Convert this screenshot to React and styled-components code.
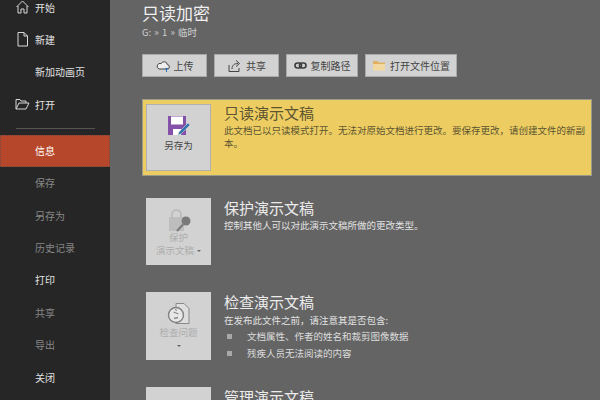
import React from "react";
import styled, { createGlobalStyle } from "styled-components";

const GlobalStyle = createGlobalStyle`
  html, body { margin: 0; padding: 0; background: #646464; overflow: hidden; }
  body { font-family: "Noto Sans CJK SC", "Liberation Sans", sans-serif; }
`;

const Page = styled.div`
  display: flex;
  width: 600px;
  height: 400px;
  overflow: hidden;
  background: #646464;
`;

const Sidebar = styled.nav`
  width: 110px;
  height: 400px;
  flex: none;
  background: #262626;
  overflow: hidden;
`;

const NavList = styled.div`
  display: flex;
  flex-direction: column;
  margin-top: -9px;
`;

const NavItem = styled.div`
  position: relative;
  height: 32.4px;
  display: flex;
  align-items: center;
  padding-left: 35px;
  font-size: 10px;
  color: ${(p) => (p.$dim ? "#868686" : "#e2e2e2")};
`;

const ActiveItem = styled(NavItem)`
  height: 32px;
  background: #b7472a;
  color: #fff;
  outline: 1px dotted #6e4a40;
  outline-offset: -1px;
`;

const NavIcon = styled.svg`
  position: absolute;
  left: 15px;
  top: 8px;
  width: 15px;
  height: 16px;
  fill: none;
  stroke: #d8d8d8;
  stroke-width: 1;
`;

const Divider = styled.div`
  height: 1px;
  margin: 7px 15px 6px 16px;
  background: #555;
`;

const Main = styled.main`
  flex: 1;
  min-width: 0;
  padding: 0 8px 0 32px;
`;

const Title = styled.h1`
  margin: 2px 0 0;
  font-size: 17px;
  line-height: 22px;
  font-weight: 400;
  color: #f0f0f0;
`;

const Crumb = styled.div`
  margin-top: 2px;
  font-size: 9.5px;
  line-height: 12px;
  word-spacing: 1px;
  color: #cfcfcf;
`;

const Toolbar = styled.div`
  display: flex;
  gap: 7px;
  margin-top: 16px;
`;

const ToolButton = styled.div`
  box-sizing: border-box;
  width: ${(p) => p.$w}px;
  height: 23px;
  display: flex;
  align-items: center;
  justify-content: center;
  gap: 4px;
  background: #d2d2d2;
  border: 1px solid #a9a9a9;
  font-size: 10px;
  color: #444;
`;

const Section = styled.section`
  display: flex;
  height: ${(p) => p.$h}px;
  box-sizing: border-box;
  margin-top: ${(p) => p.$top}px;
  padding: 0 4px;
  gap: 13px;
`;

const Highlight = styled(Section)`
  width: 450px;
  padding: 4px 3px 4px 3px;
  background: #edcd62;
  border: 1px solid #9a9a8a;
`;

const BigButton = styled.div`
  box-sizing: border-box;
  width: 65px;
  height: ${(p) => p.$h}px;
  flex: none;
  display: flex;
  flex-direction: column;
  align-items: center;
  padding-top: ${(p) => p.$pad}px;
  background: #d2d2d2;
  border: 1px solid ${(p) => (p.$enabled ? "#b0b0b0" : "#d2d2d2")};
  font-size: 9.5px;
  line-height: 13px;
  text-align: center;
  color: ${(p) => (p.$enabled ? "#444" : "#adadad")};
`;

const ButtonLabel = styled.span`
  margin-top: ${(p) => p.$top || 0}px;
`;

const Caret = styled.span`
  display: inline-block;
  width: 0;
  height: 0;
  margin-left: ${(p) => (p.$alone ? 0 : 3)}px;
  vertical-align: middle;
  border-left: 2.5px solid transparent;
  border-right: 2.5px solid transparent;
  border-top: 2.5px solid #666;
`;

const Body = styled.div`
  flex: 1;
  min-width: 0;
`;

const Heading = styled.h2`
  margin: ${(p) => p.$top || 0}px 0 0;
  font-size: 15px;
  line-height: 20px;
  font-weight: 400;
  color: ${(p) => (p.$dark ? "#5c5430" : "#ececec")};
`;

const Desc = styled.p`
  margin: ${(p) => p.$top || 0}px 0 0;
  font-size: 9.5px;
  line-height: 12.5px;
  color: ${(p) => (p.$dark ? "#5c5430" : "#e2e2e2")};
`;

const Bullets = styled.ul`
  list-style: none;
  margin: 1px 0 0;
  padding: 0;
`;

const Bullet = styled.li`
  display: flex;
  align-items: center;
  height: 17px;
  font-size: 9.5px;
  color: #dcdcdc;

  &::before {
    content: "";
    width: 5px;
    height: 5px;
    margin: 0 15px 0 3px;
    background: #a8a8a8;
  }
`;

const Icon = styled.svg`
  flex: none;
  display: block;
`;

const CloudIcon = () => (
  <Icon width="14" height="14" viewBox="0 0 14 14" fill="none">
    <path d="M3 10h8a2.200 2.200 0 0 0 .3-4.400A3.200 3.200 0 0 0 5.200 4.600 2.800 2.800 0 0 0 3 10z" fill="#eee" stroke="#444" />
    <path d="M10.500 13V9M9 10.400l1.500-1.500 1.500 1.500" stroke="#2a6fb0" />
  </Icon>
);

const ShareIcon = () => (
  <Icon width="15" height="15" viewBox="0 0 15 15" fill="none" stroke="#444">
    <path d="M2 7v6.500h10V10" />
    <path d="M5 11c0-4 2.500-5.500 6-5.500M9 2.500l3.500 3L9 8.500" />
  </Icon>
);

const LinkIcon = () => (
  <Icon width="13" height="13" viewBox="0 0 13 13" fill="none" stroke="#3c3c3c" strokeWidth="1.6">
    <rect x="1" y="4" width="6.500" height="5" rx="2.500" />
    <rect x="5.500" y="4" width="6.500" height="5" rx="2.500" />
  </Icon>
);

const FolderIcon = () => (
  <Icon width="14" height="13" viewBox="0 0 14 13">
    <path d="M1 2h4.500l1 1.500H13V11H1z" fill="#e0b060" />
    <path d="M1 5h12v6.500H1z" fill="#f2d9a2" />
  </Icon>
);

const SaveIcon = () => (
  <Icon width="24" height="22" viewBox="0 0 24 22">
    <path d="M1 1h18v19H1z" fill="#8550a8" />
    <path d="M4 1.500h12v8H4z" fill="#fff" />
    <path d="M6 14h8v6H6z" fill="#fff" />
    <path d="M12 17l9-9 2 2-9 9-3 1z" fill="#2e75b0" stroke="#d2d2d2" strokeWidth=".6" />
  </Icon>
);

const LockIcon = () => (
  <Icon width="26" height="25" viewBox="0 0 26 25">
    <path d="M6 9V6.500a4.500 4.500 0 0 1 9 0V9" fill="none" stroke="#bdbdbd" strokeWidth="2" />
    <path d="M3 9h15v14H3z" fill="#bdbdbd" />
    <path d="M11 23l6-6.500" stroke="#7a7a7a" strokeWidth="2" />
    <circle cx="20" cy="13" r="4.500" fill="#7a7a7a" />
  </Icon>
);

const InspectIcon = () => (
  <Icon width="24" height="25" viewBox="0 0 24 25" fill="none">
    <path d="M9 1.500h8l5 5v15H9z" fill="#dedede" stroke="#8a8a8a" />
    <circle cx="9" cy="13" r="7.500" fill="#e8e8e8" stroke="#808080" strokeWidth="1.400" />
    <path d="M6.500 10l5 2M11 15.500l-4 1M8 7.500l2 1" stroke="#8a8a8a" strokeWidth="1.300" />
  </Icon>
);

export default function App() {
  return (
    <Page>
      <GlobalStyle />
      <Sidebar>
        <NavList>
          <NavItem>
            <NavIcon viewBox="0 0 15 16"><path d="M1.500 8L7.500 2l6 6M3 7v7h3v-4h3v4h3V7" /></NavIcon>
            开始
          </NavItem>
          <NavItem>
            <NavIcon viewBox="0 0 15 16"><path d="M3 1.500h6l3.500 3.500v10H3zM9 1.500V5h3.500" /></NavIcon>
            新建
          </NavItem>
          <NavItem>新加动画页</NavItem>
          <NavItem>
            <NavIcon viewBox="0 0 15 16"><path d="M1 13V3.500h4l1 1.500h5v2M1 13l3-6h10l-3 6z" /></NavIcon>
            打开
          </NavItem>
          <Divider />
          <ActiveItem>信息</ActiveItem>
          <NavItem $dim>保存</NavItem>
          <NavItem $dim>另存为</NavItem>
          <NavItem $dim>历史记录</NavItem>
          <NavItem>打印</NavItem>
          <NavItem $dim>共享</NavItem>
          <NavItem $dim>导出</NavItem>
          <NavItem>关闭</NavItem>
        </NavList>
      </Sidebar>
      <Main>
        <Title>只读加密</Title>
        <Crumb>G: » 1 » 临时</Crumb>
        <Toolbar>
          <ToolButton $w={65}><CloudIcon />上传</ToolButton>
          <ToolButton $w={65}><ShareIcon />共享</ToolButton>
          <ToolButton $w={72}><LinkIcon />复制路径</ToolButton>
          <ToolButton $w={92}><FolderIcon />打开文件位置</ToolButton>
        </Toolbar>

        <Highlight $h={77} $top={22}>
          <BigButton $enabled $h={67} $pad={10}>
            <SaveIcon />
            <ButtonLabel $top={2}>另存为</ButtonLabel>
          </BigButton>
          <Body>
            <Heading $dark $top={-1}>只读演示文稿</Heading>
            <Desc $dark $top={1}>
              此文档已以只读模式打开。无法对原始文档进行更改。要保存更改，请创建文件的新副本。
            </Desc>
          </Body>
        </Highlight>

        <Section $h={67} $top={22}>
          <BigButton $h={67} $pad={9}>
            <LockIcon />
            <ButtonLabel $top={-2}>保护</ButtonLabel>
            <ButtonLabel>演示文稿<Caret /></ButtonLabel>
          </BigButton>
          <Body>
            <Heading>保护演示文稿</Heading>
            <Desc $top={1}>控制其他人可以对此演示文稿所做的更改类型。</Desc>
          </Body>
        </Section>

        <Section $h={68} $top={27}>
          <BigButton $h={68} $pad={9}>
            <InspectIcon />
            <ButtonLabel $top={-1}>检查问题</ButtonLabel>
            <ButtonLabel><Caret $alone /></ButtonLabel>
          </BigButton>
          <Body>
            <Heading>检查演示文稿</Heading>
            <Desc $top={2}>在发布此文件之前，请注意其是否包含:</Desc>
            <Bullets>
              <Bullet>文档属性、作者的姓名和裁剪图像数据</Bullet>
              <Bullet>残疾人员无法阅读的内容</Bullet>
            </Bullets>
          </Body>
        </Section>

        <Section $h={68} $top={27}>
          <BigButton $h={68} $pad={9} />
          <Body>
            <Heading>管理演示文稿</Heading>
          </Body>
        </Section>
      </Main>
    </Page>
  );
}
